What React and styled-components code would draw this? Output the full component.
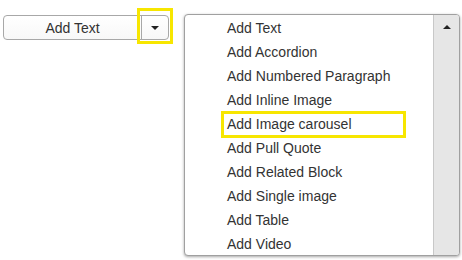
import React from 'react'
import styled, { createGlobalStyle } from 'styled-components'

const GlobalStyle = createGlobalStyle`
    body {
        margin: 0;
        background: #ffffff;
        font-family: "Liberation Sans", Arial, sans-serif;
    }
`

const Page = styled.div`
    display: flex;
    align-items: flex-start;
    padding: 15px 0 0 3px;
    width: 462px;
    height: 260px;
    box-sizing: border-box;
`

const SplitButton = styled.div`
    position: relative;
    display: flex;
    width: 166px;
    height: 25px;
    box-sizing: border-box;
    border: 1px solid #a8a8a8;
    border-radius: 4px;
    background: linear-gradient(#ffffff, #f8f8f8);
`

const MainPart = styled.div`
    flex: 1;
    display: flex;
    align-items: center;
    justify-content: center;
    font-size: 14px;
    color: #333;
`

const CaretPart = styled.div`
    width: 26px;
    display: flex;
    align-items: center;
    justify-content: center;
    border-left: 1px solid #a8a8a8;
`

const Caret = styled.span`
    width: 0;
    height: 0;
    border-left: 4px solid transparent;
    border-right: 4px solid transparent;
    border-${(p) => (p.up ? 'bottom' : 'top')}: 4px solid #222;
`

const Marker = styled.span`
    position: absolute;
    left: ${(p) => p.left}px;
    top: ${(p) => p.top}px;
    width: ${(p) => p.w}px;
    height: ${(p) => p.h}px;
    border: 3px solid #f7e600;
    box-sizing: border-box;
    pointer-events: none;
`

const Dropdown = styled.div`
    display: flex;
    margin: -1px 0 0 15px;
    width: 276px;
    height: 242px;
    box-sizing: border-box;
    border: 1px solid #a0a0a0;
    border-radius: 4px;
    background: #fff;
    box-shadow: 0 1px 3px rgba(0, 0, 0, 0.35);
    overflow: hidden;
`

const List = styled.ul`
    position: relative;
    flex: 1;
    list-style: none;
    margin: 0;
    padding: 1px 0 0 0;
`

const Item = styled.li`
    height: 24px;
    line-height: 24px;
    padding-left: 42px;
    font-size: 14px;
    color: #333;
    white-space: nowrap;
`

const Scrollbar = styled.div`
    width: 26px;
    background: #e6e6e6;
    border-left: 1px solid #c8c8c8;
    display: flex;
    justify-content: center;
    padding-top: 10px;
    box-sizing: border-box;
`

const items = [
    'Add Text',
    'Add Accordion',
    'Add Numbered Paragraph',
    'Add Inline Image',
    'Add Image carousel',
    'Add Pull Quote',
    'Add Related Block',
    'Add Single image',
    'Add Table',
    'Add Video',
]

const App = () => {
    return (
        <>
            <GlobalStyle />
            <Page>
                <SplitButton>
                    <MainPart>Add Text</MainPart>
                    <CaretPart>
                        <Caret />
                    </CaretPart>
                    <Marker left={133} top={-8} w={36} h={36} />
                </SplitButton>
                <Dropdown>
                    <List>
                        {items.map((label) => (
                            <Item key={label}>{label}</Item>
                        ))}
                        <Marker left={36} top={96} w={185} h={27} />
                    </List>
                    <Scrollbar>
                        <Caret up />
                    </Scrollbar>
                </Dropdown>
            </Page>
        </>
    )
}

export default App
